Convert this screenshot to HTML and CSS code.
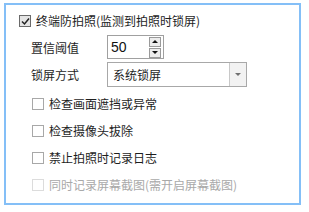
FILE: index.html
```html
<!DOCTYPE html>
<html lang="zh-CN">
<head>
    <meta charset="UTF-8">
    <title>终端防拍照</title>
    <link rel="stylesheet" href="styles.css">
</head>
<body>
    <div class="panel">
        <label class="check-row main-check">
            <span class="box checked">
                <svg width="9" height="9" viewBox="0 0 9 9"><path d="M1 4.5 L3.5 7 L8 1.5" fill="none" stroke="#222" stroke-width="1.5"/></svg>
            </span>
            <span>终端防拍照(监测到拍照时锁屏)</span>
        </label>

        <div class="field-row spin-row">
            <span class="field-label">置信阈值</span>
            <div class="spin-box">
                <span class="spin-value">50</span>
                <div class="spin-btns">
                    <span class="spin-btn"><i class="tri-up"></i></span>
                    <span class="spin-btn"><i class="tri-down"></i></span>
                </div>
            </div>
        </div>

        <div class="field-row select-row">
            <span class="field-label">锁屏方式</span>
            <div class="select-box">
                <span class="select-value">系统锁屏</span>
                <span class="select-arrow"><i class="tri-down grey"></i></span>
            </div>
        </div>

        <label class="check-row sub-check">
            <span class="box"></span>
            <span>检查画面遮挡或异常</span>
        </label>
        <label class="check-row sub-check">
            <span class="box"></span>
            <span>检查摄像头拔除</span>
        </label>
        <label class="check-row sub-check">
            <span class="box"></span>
            <span>禁止拍照时记录日志</span>
        </label>
        <label class="check-row sub-check disabled">
            <span class="box"></span>
            <span>同时记录屏幕截图(需开启屏幕截图)</span>
        </label>
    </div>
</body>
</html>
```

FILE: styles.css
```css
body {
    margin: 0;
    background: #ffffff;
    font-family: "Noto Sans CJK SC", "Liberation Sans", sans-serif;
    font-size: 12px;
    color: #1e1e1e;
}

.panel {
    margin: 3px 0 0 4px;
    width: 280px;
    height: 188px;
    border: 2px solid #84bff7;
    padding: 5px 0 5px 13px;
    box-sizing: content-box;
    display: flex;
    flex-direction: column;
    gap: 3px;
}

.check-row {
    display: flex;
    align-items: center;
    gap: 5px;
    line-height: 14px;
}

.main-check {
    height: 22px;
}

.sub-check {
    height: 27px;
    margin-left: 13px;
}

.panel .sub-check + .sub-check {
    margin-top: -3px;
}

.box {
    width: 10px;
    height: 10px;
    border: 1px solid #a8a8a8;
    background: #fff;
    display: flex;
    align-items: center;
    justify-content: center;
    flex-shrink: 0;
}

.box.checked {
    border-color: #6a6a6a;
    background: #e4e4e4;
}

.disabled {
    color: #a9a9a9;
}

.disabled .box {
    border-color: #dcdcdc;
}

.field-row {
    display: flex;
    align-items: center;
    margin-left: 12px;
}

.spin-row {
    height: 24px;
}

.select-row {
    height: 25px;
}

.field-label {
    width: 76px;
}

.spin-box {
    width: 53px;
    height: 22px;
    border: 1px solid #a0a0a0;
    display: flex;
    align-items: center;
    justify-content: space-between;
    padding-right: 2px;
    box-sizing: content-box;
}

.spin-box .spin-value {
    padding-left: 3px;
    font-family: "Liberation Sans", sans-serif;
    font-size: 14px;
    color: #111;
}

.spin-btns {
    display: flex;
    flex-direction: column;
    gap: 1px;
}

.spin-btn {
    width: 10px;
    height: 8px;
    border: 1px solid #9a9a9a;
    background: #ececec;
    display: flex;
    align-items: center;
    justify-content: center;
}

.tri-up {
    width: 0;
    height: 0;
    border-left: 3px solid transparent;
    border-right: 3px solid transparent;
    border-bottom: 3px solid #111;
}

.tri-down {
    width: 0;
    height: 0;
    border-left: 3px solid transparent;
    border-right: 3px solid transparent;
    border-top: 3px solid #111;
}

.tri-down.grey {
    border-top-color: #707070;
}

.select-box {
    width: 138px;
    height: 23px;
    border: 1px solid #a8a8a8;
    display: flex;
    align-items: center;
    justify-content: space-between;
}

.select-value {
    padding-left: 5px;
    line-height: 14px;
}

.select-arrow {
    width: 16px;
    height: 23px;
    border-left: 1px solid #c8c8c8;
    background: #f2f2f2;
    display: flex;
    align-items: center;
    justify-content: center;
}
```
